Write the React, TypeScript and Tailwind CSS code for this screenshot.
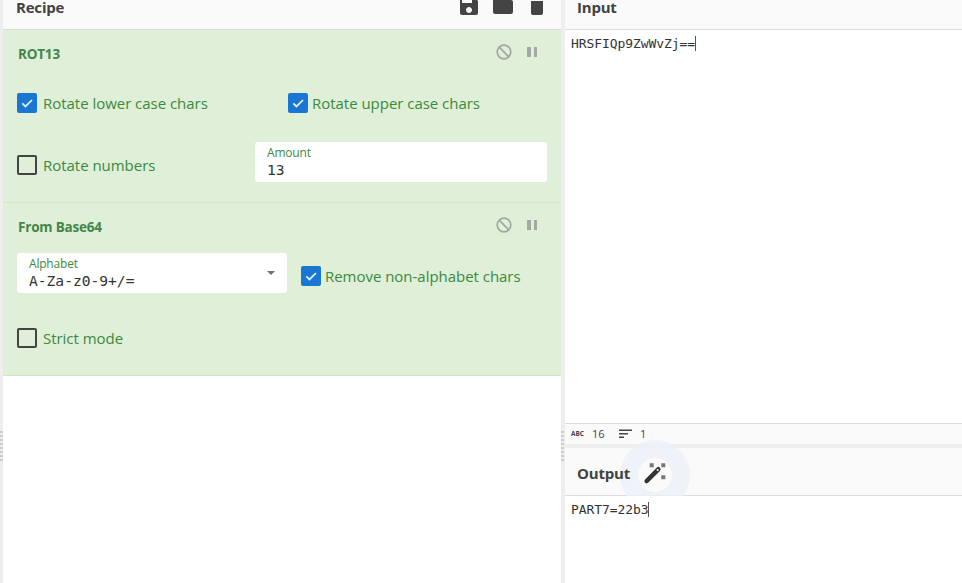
const sans = "font-['Open_Sans',sans-serif]";
const mono = "font-['DejaVu_Sans_Mono',monospace]";

function Box({ checked }: { checked?: boolean }) {
  if (!checked) {
    return <span className="block w-[20px] h-[20px] shrink-0 rounded-[2px] border-2 border-[#444]" />;
  }
  return (
    <span className="flex items-center justify-center w-[20px] h-[20px] shrink-0 rounded-[2px] bg-[#1976d2]">
      <svg viewBox="0 0 24 24" className="w-[16px] h-[16px]" fill="none" stroke="#e8f2fb" strokeWidth="2.6">
        <path d="M5 12.5l4.7 4.7L19.5 7.5" />
      </svg>
    </span>
  );
}

function Check({ label, checked, tight, className }: { label: string; checked?: boolean; tight?: boolean; className?: string }) {
  return (
    <div className={(tight ? "gap-[4px] " : "gap-[6px] ") + "flex items-center mt-[6px] " + (className ?? "")}>
      <Box checked={checked} />
      <span className="text-[15px] leading-[20px] text-[#3c8a3e] whitespace-nowrap tracking-[-0.03px]">{label}</span>
    </div>
  );
}

function Field({ label, value, className, caret }: { label: string; value: string; className: string; caret?: boolean }) {
  return (
    <div className={"relative h-[40px] rounded-[3px] bg-white px-[12px] pt-[4px] " + className}>
      <div className="text-[12px] leading-[14px] text-[#3c8a3e] tracking-[-0.2px]">{label}</div>
      <div className={mono + " text-[14.6px] leading-[20px] text-[#333]"}>{value}</div>
      {caret && (
        <span className="absolute right-[12px] top-[18px] w-0 h-0 border-x-[4px] border-x-transparent border-t-[4px] border-t-[#6b7280]" />
      )}
    </div>
  );
}

function OpHead({ title }: { title: string }) {
  return (
    <div className="flex items-center justify-between h-[48px] pl-[1px] pr-[10px]">
      <span className="text-[13.5px] font-bold text-[#44854a] tracking-[-0.2px]">{title}</span>
      <div className="flex items-center gap-[15px] -mt-[4px]">
        <svg viewBox="0 0 16 16" className="w-[16px] h-[16px]" fill="none" stroke="#a3a8a3" strokeWidth="1.7">
          <circle cx="8" cy="8" r="6.8" />
          <path d="M3.2 3.2l9.6 9.6" />
        </svg>
        <div className="flex gap-[3px]">
          <span className="w-[3.5px] h-[10px] bg-[#a3a8a3]" />
          <span className="w-[3.5px] h-[10px] bg-[#a3a8a3]" />
        </div>
      </div>
    </div>
  );
}

function Dots() {
  return (
    <div className="flex flex-col gap-[2px] mt-[431px]">
      {[0, 1, 2, 3, 4, 5, 6, 7].map((i) => (
        <span key={i} className="block w-[3px] h-[2px] bg-[#ccc]" />
      ))}
    </div>
  );
}

function TopIcon({ d }: { d: string }) {
  return (
    <svg viewBox="0 0 24 24" className="w-[24px] h-[24px] shrink-0 -mt-[6px]" fill="#444">
      <path d={d} />
    </svg>
  );
}

export default function App() {
  return (
    <div className={"flex w-[962px] h-[583px] overflow-hidden bg-white " + sans}>
      <div className="w-[3px] shrink-0 bg-[#eee]">
        <Dots />
      </div>

      <div className="w-[558px] shrink-0 flex flex-col bg-white">
        <div className="flex justify-between h-[30px] overflow-hidden pl-[13px] pr-[12px] bg-[#fafafa] border-b border-[#ddd]">
          <span className="text-[15px] leading-[15px] font-bold text-[#424242] tracking-[-0.2px]">Recipe</span>
          <div className="flex gap-[10px]">
            <TopIcon d="M17 3H5c-1.11 0-2 .9-2 2v14c0 1.1.89 2 2 2h14c1.1 0 2-.9 2-2V7l-4-4zm-5 16c-1.66 0-3-1.34-3-3s1.34-3 3-3 3 1.34 3 3-1.34 3-3 3zm3-10H5V5h10v4z" />
            <TopIcon d="M10 4H4c-1.1 0-1.99.9-1.99 2L2 18c0 1.1.9 2 2 2h16c1.1 0 2-.9 2-2V8c0-1.1-.9-2-2-2h-8l-2-2z" />
            <TopIcon d="M6 19c0 1.1.9 2 2 2h8c1.1 0 2-.9 2-2V7H6v12zM19 4h-3.5l-1-1h-5l-1 1H5v2h14V4z" />
          </div>
        </div>

        <section className="h-[173px] px-[14px] bg-[#dfefd8] border-b border-[#d3e8c9]">
          <OpHead title="ROT13" />
          <div className="flex items-center h-[40px] mt-[2px]">
            <Check label="Rotate lower case chars" checked className="w-[271px]" />
            <Check label="Rotate upper case chars" checked tight />
          </div>
          <div className="flex items-center h-[40px] mt-[22px]">
            <Check label="Rotate numbers" className="w-[238px]" />
            <Field label="Amount" value="13" className="w-[292px]" />
          </div>
        </section>

        <section className="h-[173px] px-[14px] bg-[#dfefd8] border-b border-[#cfe6c3]">
          <OpHead title="From Base64" />
          <div className="flex items-center h-[40px] mt-[2px]">
            <Field label="Alphabet" value="A-Za-z0-9+/=" caret className="w-[270px]" />
            <Check label="Remove non-alphabet chars" checked tight className="ml-[14px]" />
          </div>
          <div className="flex items-center h-[40px] mt-[22px]">
            <Check label="Strict mode" />
          </div>
        </section>
      </div>

      <div className="w-[4px] shrink-0 bg-[#eee]">
        <Dots />
      </div>

      <div className="flex-1 flex flex-col min-w-0">
        <div className="h-[30px] shrink-0 overflow-hidden pl-[12px] bg-[#fafafa] border-b border-[#ddd]">
          <span className="block text-[15px] leading-[15px] font-bold text-[#424242] tracking-[-0.2px]">Input</span>
        </div>
        <div className={mono + " h-[393px] shrink-0 pl-[6px] pt-[5px] text-[13px] leading-[18px] text-[#333] tracking-[-0.08px]"}>
          <span className="border-r border-[#555]">HRSFIQp9ZwWvZj==</span>
        </div>
        <div className="flex items-center h-[21px] shrink-0 pl-[6px] bg-[#fafafa] border-t border-[#ddd] text-[11px] text-[#444]">
          <span className="text-[6.5px] leading-none font-bold w-[21px]">ABC</span>
          <span className="w-[27px]">16</span>
          <svg viewBox="0 0 14 10" className="w-[14px] h-[10px] mr-[7px]" fill="#444">
            <rect x="0" y="0.5" width="13" height="1.5" />
            <rect x="0" y="4" width="9" height="1.5" />
            <rect x="0" y="7.5" width="5" height="1.5" />
          </svg>
          <span>1</span>
        </div>
        <div className="h-[4px] shrink-0 bg-[#eee]" />
        <div className="relative flex items-center h-[48px] shrink-0 pl-[12px] pt-[4px] bg-[#fafafa] border-b border-[#ddd]">
          <div className="absolute left-[55px] top-[-8px] flex items-center justify-center w-[70px] h-[70px] rounded-full bg-[#eaf1f8]/80">
            <div className="flex items-center justify-center w-[34px] h-[34px] rounded-full bg-[#fafafa]">
              <svg viewBox="0 0 24 24" className="w-[24px] h-[24px]">
                <path d="M3.7 18L15.3 6.3" stroke="#333" strokeWidth="4.6" strokeLinecap="round" />
                <circle cx="14.7" cy="7" r="1.1" fill="#eee" />
                <path d="M6.7 .2h4v4h-4zM18.3 .2h4v4h-4zM18.3 12.2h4v4h-4z" fill="#777" />
              </svg>
            </div>
          </div>
          <span className="relative text-[15px] font-bold text-[#424242] tracking-[-0.2px]">Output</span>
        </div>
        <div className={mono + " relative flex-1 bg-white pl-[6px] pt-[5px] text-[13px] leading-[18px] text-[#333] tracking-[-0.08px]"}>
          <span className="border-r border-[#555]">PART7=22b3</span>
        </div>
      </div>
    </div>
  );
}
